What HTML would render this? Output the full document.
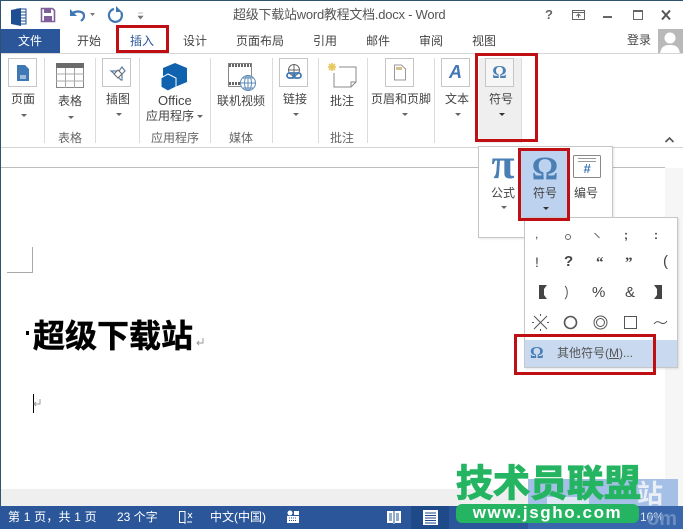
<!DOCTYPE html>
<html><head><meta charset="utf-8">
<style>
html,body{margin:0;padding:0;background:#fff}
#p{position:relative;width:683px;height:529px;overflow:hidden;background:#fff;font-family:"Liberation Sans","Noto Sans CJK SC",sans-serif;color:#444}
.a{position:absolute}
.t{position:absolute;white-space:nowrap;font-size:12px;line-height:14px;color:#444;text-align:center}
.r{position:absolute;border:3px solid #c00f14;box-sizing:border-box}
.s{position:absolute;width:1px;background:#dcdcdc;top:58px;height:85px}
.b{position:absolute;width:29px;height:29px;border:1px solid #c6c6c6;background:#fff;box-sizing:border-box;top:58px}
.c{position:absolute;width:0;height:0;border-left:3px solid transparent;border-right:3px solid transparent;border-top:3px solid #666}
</style></head><body><div id="p">

<!-- window frame -->
<div class="a" style="left:0;top:0;width:683px;height:1px;background:#2f5470"></div>
<div class="a" style="left:0;top:0;width:1px;height:529px;background:#2f5470"></div>

<!-- QAT -->
<svg class="a" style="left:0;top:0" width="160" height="29">
<path d="M17 9h9v15h-9z" fill="#fff" stroke="#1d4f91"/><path d="M11 10l10-2v18l-10-2z" fill="#1f4e93"/>
<path d="M21 12h5M21 15h5M21 18h5M21 21h5" stroke="#1d4f91"/>
<path d="M41.500 8.500h11l2 2v11h-13z" fill="#fff" stroke="#80609a" stroke-width="1.600"/><rect x="44" y="9" width="7" height="4" fill="#80609a"/><rect x="44" y="16" width="8" height="6" fill="#80609a"/>
<path d="M71 14c6-4 13-3 13 2 0 3-2 4-3 5" fill="none" stroke="#3f78b4" stroke-width="2.200"/><path d="M70 9v7h7z" fill="#3f78b4"/>
<path d="M90 13h5l-2.500 3z" fill="#777"/>
<path d="M114 9a6.500 6.500 0 1 0 7 3" fill="none" stroke="#3f78b4" stroke-width="2.200"/><path d="M116 6v6h6z" fill="#3f78b4"/>
<path d="M138 13h5M138 16h5l-2.500 3z" fill="#777" stroke="#777" stroke-width=".6"/>
</svg>

<div class="t" style="left:233px;top:7px;font-size:13px;line-height:16px;color:#555;letter-spacing:-.25px">超级下载站word教程文档.docx - Word</div>

<!-- window buttons -->
<div class="t" style="left:545px;top:8px;font-weight:bold;font-size:13px;color:#666">?</div>
<svg class="a" style="left:570px;top:5px" width="110" height="20">
<rect x="2.500" y="5.500" width="12" height="9" fill="none" stroke="#666"/><path d="M2 7.500h13M8.500 13v-4M6.500 11l2-2 2 2" stroke="#666" fill="none"/>
<path d="M33 12h9" stroke="#666" stroke-width="2"/>
<rect x="63.500" y="5.500" width="9" height="9" fill="none" stroke="#666"/><path d="M63 6h10" stroke="#666" stroke-width="2"/>
<path d="M92 5.500l8 9M100 5.500l-8 9" stroke="#555" stroke-width="2"/>
</svg>

<!-- Tabs -->
<div class="a" style="left:1px;top:29px;width:59px;height:25px;background:#2b579a"></div>
<div class="t" style="left:18px;top:34px;color:#fff;font-size:12px">文件</div>
<div class="t" style="left:77px;top:34px">开始</div>
<div class="t" style="left:130px;top:34px;color:#2b579a">插入</div>
<div class="t" style="left:183px;top:34px">设计</div>
<div class="t" style="left:236px;top:34px">页面布局</div>
<div class="t" style="left:313px;top:34px">引用</div>
<div class="t" style="left:366px;top:34px">邮件</div>
<div class="t" style="left:419px;top:34px">审阅</div>
<div class="t" style="left:472px;top:34px">视图</div>
<div class="t" style="left:627px;top:33px">登录</div>
<svg class="a" style="left:658px;top:29px" width="25" height="25"><rect width="25" height="25" fill="#b9b9b9"/><circle cx="12" cy="9" r="5.500" fill="#fff"/><path d="M2 25c1-8 5-9 10-9s9 1 10 9z" fill="#fff"/></svg>
<div class="a" style="left:1px;top:53px;width:682px;height:1px;background:#d6d6d6"></div>

<!-- Ribbon -->
<div class="a" style="left:1px;top:147px;width:682px;height:1px;background:#d4d4d4"></div>
<div class="a" style="left:479px;top:58px;width:42px;height:85px;background:#efefef;border-right:1px solid #dcdcdc"></div>

<div class="s" style="left:44px"></div><div class="s" style="left:95px"></div><div class="s" style="left:139px"></div><div class="s" style="left:210px"></div><div class="s" style="left:272px"></div><div class="s" style="left:318px"></div><div class="s" style="left:367px"></div><div class="s" style="left:434px"></div>

<!-- 页面 -->
<div class="b" style="left:8px"></div>
<svg class="a" style="left:15px;top:64px" width="16" height="18"><path d="M2 1h8l4 4v12h-12z" fill="#3f78b4"/><path d="M5 12h6M5 14h6" stroke="#fff"/></svg>
<div class="t" style="left:11px;top:92px">页面</div><div class="c" style="left:21px;top:114px"></div>

<!-- 表格 -->
<svg class="a" style="left:56px;top:63px" width="29" height="26"><rect x=".5" y=".5" width="27" height="24" fill="#fff" stroke="#888"/><rect x="0" y="0" width="28" height="5" fill="#6b6b6b"/><path d="M0 11h28M0 18h28M9.500 5v20M18.500 5v20" stroke="#a8a8a8"/></svg>
<div class="t" style="left:58px;top:94px">表格</div><div class="c" style="left:68px;top:116px"></div>
<div class="t" style="left:58px;top:131px;color:#666">表格</div>

<!-- 插图 -->
<div class="b" style="left:102px"></div>
<svg class="a" style="left:109px;top:64px" width="18" height="18"><path d="M2 7h8l3-4 3 4-3 3v6h-1l-4-4z" fill="none" stroke="#5e7f9e" stroke-width="1.200"/><path d="M5 10l4 4 4-4-4-4z" fill="#fff" stroke="#666"/></svg>
<div class="t" style="left:106px;top:92px">插图</div><div class="c" style="left:116px;top:113px"></div>

<!-- Office -->
<svg class="a" style="left:159px;top:62px" width="30" height="30"><path d="M16 1l12 5v14l-12 5-12-5V6z" fill="#0f62ae"/><path d="M9 12l8 4v9l-8 4-7-4v-9z" fill="#0f62ae" stroke="#fff"/></svg>
<div class="t" style="left:158px;top:94px;font-size:13px">Office</div>
<div class="t" style="left:146px;top:109px;font-size:12px">应用程序</div><div class="c" style="left:197px;top:115px"></div>
<div class="t" style="left:151px;top:131px;color:#666">应用程序</div>

<!-- 联机视频 -->
<svg class="a" style="left:228px;top:63px" width="30" height="29"><rect x=".5" y=".5" width="23" height="23" fill="#fff" stroke="#888"/><path d="M1 2.500h22M1 20.500h12" stroke="#666" stroke-width="3" stroke-dasharray="2 1"/><circle cx="20" cy="20" r="7.500" fill="#fff" stroke="#5d8ab5"/><path d="M12.500 20h15M20 12.500v15M15 15h10M15 25h10" stroke="#5d8ab5" fill="none"/><ellipse cx="20" cy="20" rx="3.500" ry="7.500" fill="none" stroke="#5d8ab5"/></svg>
<div class="t" style="left:217px;top:94px">联机视频</div>
<div class="t" style="left:229px;top:131px;color:#666">媒体</div>

<!-- 链接 -->
<div class="b" style="left:279px"></div>
<svg class="a" style="left:285px;top:63px" width="18" height="19"><circle cx="9" cy="7" r="5.500" fill="#fff" stroke="#666"/><path d="M3.500 7h11M9 1.500v11" stroke="#666"/><rect x="2" y="10" width="8" height="5" rx="2.500" fill="none" stroke="#3f78b4" stroke-width="1.800"/><rect x="8" y="10" width="8" height="5" rx="2.500" fill="none" stroke="#3f78b4" stroke-width="1.800"/></svg>
<div class="t" style="left:283px;top:92px">链接</div><div class="c" style="left:293px;top:113px"></div>

<!-- 批注 -->
<svg class="a" style="left:325px;top:60px" width="32" height="30"><path d="M7 3v8M3 7h8M4 4l6 6M10 4l-6 6" stroke="#e8c860" stroke-width="1.800"/><path d="M9 13v14h17l5-5V7H14" fill="#fff" stroke="#888"/><path d="M26 27v-5h5" fill="none" stroke="#888"/></svg>
<div class="t" style="left:330px;top:94px">批注</div>
<div class="t" style="left:330px;top:131px;color:#666">批注</div>

<!-- 页眉和页脚 -->
<div class="b" style="left:385px"></div>
<svg class="a" style="left:393px;top:64px" width="14" height="17"><path d="M1.500 1h7l4 4v11h-11z" fill="#fff" stroke="#999"/><rect x="3" y="3" width="6" height="3" fill="#d3c08c"/></svg>
<div class="t" style="left:371px;top:92px">页眉和页脚</div><div class="c" style="left:402px;top:113px"></div>

<!-- 文本 -->
<div class="b" style="left:441px"></div>
<div class="t" style="left:441px;top:62px;width:29px;font:italic bold 18px/20px 'Liberation Sans',sans-serif;color:#3f78b4">A</div>
<div class="t" style="left:445px;top:92px">文本</div><div class="c" style="left:455px;top:113px"></div>

<!-- 符号 -->
<div class="b" style="left:485px;background:#f6f6f6"></div>
<div class="t" style="left:485px;top:62px;width:29px;font:bold 18px/20px 'Liberation Serif',serif;color:#4a7fb5">Ω</div>
<div class="t" style="left:489px;top:92px">符号</div>
<div class="c" style="left:499px;top:113px;border-top-color:#333"></div>
<svg class="a" style="left:663px;top:136px" width="14" height="8"><path d="M2.500 6l4-4 4 4" fill="none" stroke="#555" stroke-width="1.600"/></svg>

<!-- ruler band -->
<div class="a" style="left:1px;top:167px;width:664px;height:1px;background:#bdbdbd"></div>

<!-- margin mark -->
<div class="a" style="left:7px;top:272px;width:26px;height:1px;background:#aaa"></div>
<div class="a" style="left:32px;top:247px;width:1px;height:26px;background:#aaa"></div>

<!-- doc text -->
<div class="a" style="left:26px;top:331px;width:3px;height:4px;background:#000"></div>
<div class="t" style="left:33px;top:318px;font-size:32px;line-height:36px;font-weight:bold;color:#000;-webkit-text-stroke:.5px #000">超级下载站</div>
<svg class="a" style="left:194px;top:336px" width="12" height="12"><path d="M9 2v5H3M5 5L3 7l2 2" fill="none" stroke="#999"/></svg>
<div class="a" style="left:33px;top:394px;width:1px;height:19px;background:#000"></div>
<svg class="a" style="left:33px;top:398px" width="9" height="12"><path d="M7 1v5H1M3 4L1 6l2 2" fill="none" stroke="#999"/></svg>

<!-- scrollbar region -->
<div class="a" style="left:665px;top:168px;width:18px;height:338px;background:#f6f6f6"></div>
<div class="a" style="left:1px;top:489px;width:664px;height:17px;background:#efefef"></div>

<!-- status bar -->
<div class="a" style="left:0;top:506px;width:683px;height:23px;background:#2b579a"></div>
<div class="a" style="left:411px;top:506px;width:38px;height:23px;background:#1f4a8a"></div>
<div class="t" style="left:8px;top:510px;color:#fff;font-size:12px;line-height:15px;letter-spacing:.2px">第 1 页，共 1 页</div>
<div class="t" style="left:117px;top:510px;color:#fff;line-height:15px">23 个字</div>
<svg class="a" style="left:178px;top:510px" width="16" height="15"><path d="M7 1.500H1.500v11H7M7 1v13" fill="none" stroke="#fff"/><path d="M10 3l4 5M14 3l-4 5" stroke="#fff"/><path d="M9 12h5" stroke="#fff"/></svg>
<div class="t" style="left:210px;top:510px;color:#fff;line-height:15px">中文(中国)</div>
<svg class="a" style="left:286px;top:510px" width="14" height="14"><circle cx="4" cy="3" r="2.500" fill="#fff"/><rect x="1" y="6" width="12" height="7" fill="#fff"/><rect x="8" y="1" width="5" height="4" fill="#fff"/><path d="M3 8h8M3 10.500h8" stroke="#2b579a" stroke-dasharray="1 1"/></svg>
<svg class="a" style="left:386px;top:510px" width="16" height="14"><path d="M1 1h6l1 1 1-1h6v12H9l-1 1-1-1H1z" fill="#fff"/><path d="M8 2v11M3 4h3M3 6h3M3 8h3M3 10h3M10 4h3M10 6h3M10 8h3M10 10h3" stroke="#2b579a"/></svg>
<svg class="a" style="left:423px;top:510px" width="15" height="15"><rect x=".5" y=".5" width="14" height="14" fill="#fff" stroke="#fff"/><path d="M2 3h11M2 5.500h11M2 8h11M2 10.500h11M2 13h11" stroke="#1f4a8a"/></svg>

<!-- watermark back -->
<div class="a" style="left:528px;top:479px;width:150px;height:27px;background:#a4c0e6"></div>
<div class="a" style="left:528px;top:506px;width:155px;height:23px;background:#3a66ab"></div>
<div class="t" style="left:637px;top:479px;font-size:26px;line-height:30px;color:#e9eef7;font-weight:bold">站</div>
<div class="a" style="left:547px;top:497px;width:42px;height:9px;background:#dfe7f4"></div>
<div class="t" style="left:640px;top:510px;color:#dfe7f4;font-size:12px;line-height:15px">10%</div>
<div class="t" style="left:647px;top:508px;color:#6d8fc2;font-size:20px;font-weight:bold;line-height:22px">om</div>

<!-- watermark -->
<div class="t" style="left:456px;top:459px;line-height:50px;font-weight:bold;color:#25b562;width:190px;text-align:left;font-size:37px;-webkit-text-stroke:1.2px #25b562">技术员联盟</div>
<div class="a" style="left:456px;top:504px;width:183px;height:19px;background:#25b562;border-radius:6px"></div>
<div class="t" style="left:456px;top:504px;width:183px;height:19px;font-size:17px;line-height:18px;font-weight:bold;color:#fff;letter-spacing:1.600px">www.jsgho.com</div>

<!-- symbol dropdown gallery -->
<div class="a" style="left:478px;top:146px;width:135px;height:92px;background:#fff;border:1px solid #c6c6c6;box-sizing:border-box;box-shadow:1px 1px 2px rgba(0,0,0,.1)"></div>
<div class="a" style="left:521px;top:150px;width:47px;height:69px;background:#bcd2ee"></div>
<div class="t" style="left:488px;top:141px;width:30px;font:bold 42px/48px 'Liberation Serif',serif;color:#4a7fb5">π</div>
<div class="t" style="left:521px;top:149px;width:48px;font:bold 33px/40px 'Liberation Serif',serif;color:#4a7fb5">Ω</div>
<svg class="a" style="left:573px;top:155px" width="29" height="24"><rect x=".5" y=".5" width="27" height="22" rx="1" fill="#fff" stroke="#888"/><path d="M5 3.500h18M5 6.500h18" stroke="#999"/></svg>
<div class="t" style="left:573px;top:161px;width:28px;font:italic bold 13px/16px 'Liberation Sans',sans-serif;color:#3f78b4">#</div>
<div class="t" style="left:491px;top:186px">公式</div><div class="c" style="left:501px;top:206px"></div>
<div class="t" style="left:533px;top:186px">符号</div><div class="c" style="left:543px;top:207px;border-top-color:#333"></div>
<div class="t" style="left:574px;top:186px">编号</div>

<!-- symbols panel -->
<div class="a" style="left:524px;top:217px;width:154px;height:151px;background:#fff;border:1px solid #c6c6c6;box-sizing:border-box;box-shadow:1px 1px 2px rgba(0,0,0,.1)"></div>
<div class="a" style="left:525px;top:340px;width:152px;height:27px;background:#c9daf0"></div>
<div class="t" style="left:535px;top:227px;color:#444">,</div>
<div class="a" style="left:565px;top:234px;width:4px;height:4px;border:1px solid #666;border-radius:50%"></div>
<svg class="a" style="left:593px;top:231px" width="9" height="9"><path d="M1.500 2l5 5" stroke="#666"/></svg>
<div class="t" style="left:624px;top:228px;font-weight:bold">;</div>
<div class="t" style="left:654px;top:228px;font-weight:bold">:</div>
<div class="t" style="left:535px;top:255px;font-size:14px">!</div>
<div class="t" style="left:564px;top:255px;font-size:15px;font-weight:bold">?</div>
<div class="t" style="left:596px;top:256px;font-size:15px;font-family:'Liberation Serif',serif;font-weight:bold">“</div>
<div class="t" style="left:625px;top:256px;font-size:15px;font-family:'Liberation Serif',serif;font-weight:bold">”</div>
<div class="t" style="left:663px;top:255px;font-size:15px">(</div>
<svg class="a" style="left:536px;top:284px" width="130" height="18"><path d="M3 1h8l-3 4v6l3 4H3z" fill="#444"/><path d="M29 2c3 3 3 10 0 13" fill="none" stroke="#555"/><path d="M118 1h8v14h-8l3-4V5z" fill="#444"/></svg>
<div class="t" style="left:592px;top:284px;font-size:15px;line-height:18px">%</div>
<div class="t" style="left:625px;top:284px;font-size:15px;line-height:18px">&amp;</div>
<svg class="a" style="left:532px;top:314px" width="145" height="18"><path d="M2 2l13 13M15 2L2 15M8.500 0v2M8.500 15v2M0 8.500h2M15 8.500h2" stroke="#555" fill="none"/><circle cx="38.500" cy="8.500" r="6" fill="none" stroke="#555" stroke-width="1.600"/><circle cx="68.500" cy="8.500" r="6.500" fill="none" stroke="#555"/><circle cx="68.500" cy="8.500" r="4" fill="none" stroke="#555"/><rect x="92.500" y="2.500" width="12" height="12" fill="none" stroke="#555"/><path d="M122 10c3-4 5-2 7-1s4 1 6-2" fill="none" stroke="#555"/></svg>
<div class="t" style="left:530px;top:343px;font:bold 17px/20px 'Liberation Serif',serif;color:#4a7fb5">Ω</div>
<div class="t" style="left:557px;top:346px;font-size:12px;color:#555">其他符号(<span style="text-decoration:underline">M</span>)...</div>

<!-- red annotation boxes -->
<div class="r" style="left:116px;top:25px;width:53px;height:28px"></div>
<div class="r" style="left:475px;top:53px;width:63px;height:89px"></div>
<div class="r" style="left:518px;top:148px;width:52px;height:73px"></div>
<div class="r" style="left:514px;top:334px;width:142px;height:41px"></div>
</div></body></html>
